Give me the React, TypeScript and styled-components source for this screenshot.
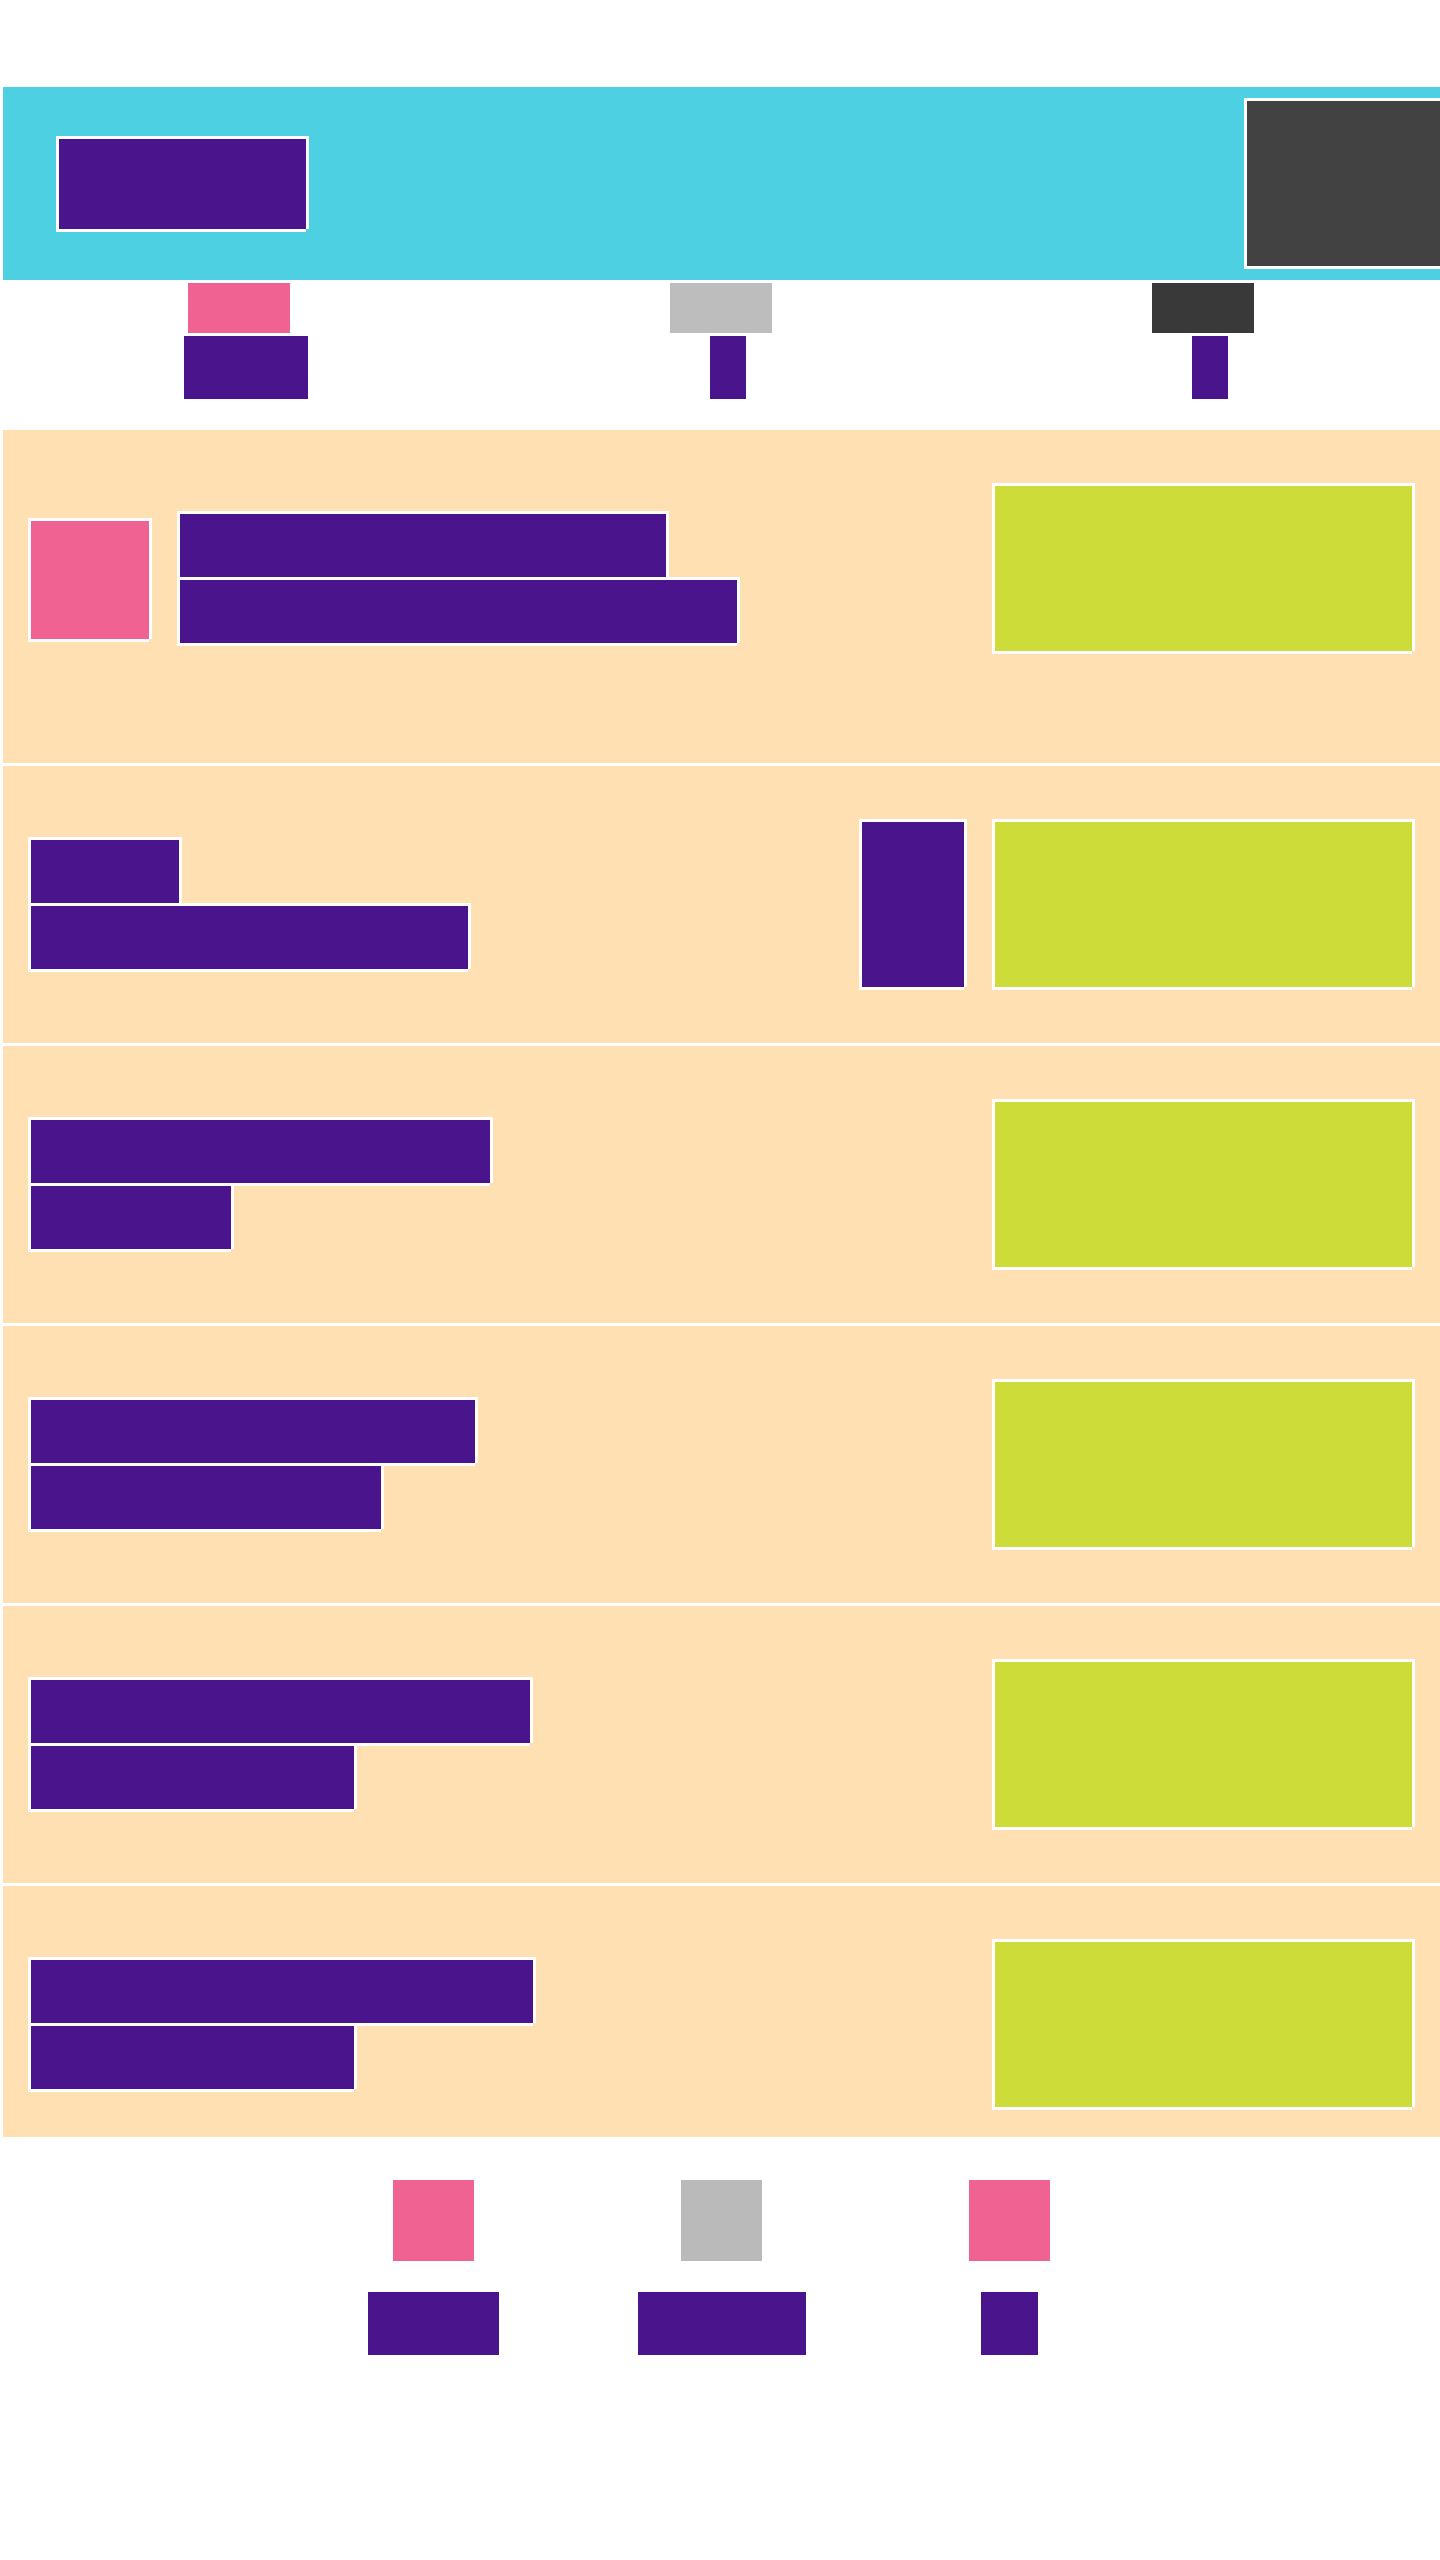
import React from "react";
import styled, { createGlobalStyle, css } from "styled-components";

const GlobalStyle = createGlobalStyle`
  html, body {
    margin: 0;
    padding: 0;
    background: #ffffff;
    font-family: "Liberation Sans", Arial, sans-serif;
    overflow-x: hidden;
  }
  * { box-sizing: border-box; }
`;

const C = {
  cyan: "#4dd0e1",
  purple: "#4a148c",
  pink: "#f06292",
  lime: "#cddc39",
  beige: "#ffe0b2",
  dark: "#424242",
  darker: "#393939",
  grey: "#bdbdbd",
  greyFooter: "#bababa",
};

const outlined = css`
  box-shadow: -3px -3px 0 #fff, 3px -3px 0 #fff, -3px 3px 0 #fff,
    3px 0 0 #fff, 0 3px 0 #fff;
`;

const Page = styled.div`
  width: 1440px;
  padding: 87px 0 0 3px;
  min-height: 2560px;
  overflow: hidden;
`;

/* ---------- Header ---------- */
const Header = styled.header`
  width: 1437px;
  height: 193px;
  background: ${C.cyan};
  display: flex;
  align-items: center;
  justify-content: space-between;
  padding-left: 56px;
`;

const Logo = styled.div`
  width: 247px;
  height: 90px;
  background: ${C.purple};
  ${outlined}
`;

const Account = styled.div`
  width: 193px;
  height: 165px;
  background: ${C.dark};
  box-shadow: -3px -3px 0 #fff, -3px 3px 0 #fff, 0 -3px 0 #fff, 0 3px 0 #fff;
`;

/* ---------- Nav ---------- */
const Nav = styled.nav`
  display: grid;
  grid-template-columns: repeat(3, 482px);
  padding: 3px 0 31px 2px;
`;

const NavItem = styled.div`
  display: flex;
  flex-direction: column;
  align-items: center;
  gap: 3px;
`;

const NavIcon = styled.div<{ $color: string }>`
  width: 102px;
  height: 50px;
  margin-right: 14px;
  background: ${(p) => p.$color};
`;

const NavLabel = styled.div<{ $w: number }>`
  width: ${(p) => p.$w}px;
  height: 63px;
  background: ${C.purple};
`;

/* ---------- Rows ---------- */
const Rows = styled.section`
  width: 1437px;
  height: 1707px;
  overflow: hidden;
  display: flex;
  flex-direction: column;
  gap: 3px;
`;

const Row = styled.article<{ $first?: boolean }>`
  flex: none;
  background: ${C.beige};
  display: flex;
  align-items: center;
  padding: 56px 28px ${(p) => (p.$first ? 112 : 56)}px 28px;
`;

const Lead = styled.div<{ $top?: boolean }>`
  flex: 1;
  display: flex;
  gap: 31px;
  align-items: flex-start;
  align-self: ${(p) => (p.$top ? "flex-start" : "center")};
  margin-top: ${(p) => (p.$top ? 28 : 0)}px;
`;

const Thumb = styled.div`
  width: 118px;
  height: 118px;
  margin-top: 7px;
  background: ${C.pink};
  ${outlined}
`;

const Lines = styled.div`
  display: flex;
  flex-direction: column;
  gap: 3px;
`;

const Line = styled.div<{ $w: number }>`
  width: ${(p) => p.$w}px;
  height: 63px;
  background: ${C.purple};
  ${outlined}
`;

const Tag = styled.div`
  width: 102px;
  height: 165px;
  margin-right: 31px;
  background: ${C.purple};
  ${outlined}
`;

const Media = styled.div`
  width: 417px;
  height: 165px;
  background: ${C.lime};
  ${outlined}
`;

/* ---------- Footer ---------- */
const Footer = styled.footer`
  width: 1437px;
  display: grid;
  grid-template-columns: repeat(3, 288px);
  justify-content: center;
  padding-top: 43px;
`;

const FooterItem = styled.div`
  display: flex;
  flex-direction: column;
  align-items: center;
  gap: 31px;
`;

const FooterIcon = styled.div<{ $color: string }>`
  width: 81px;
  height: 81px;
  background: ${(p) => p.$color};
`;

const FooterLabel = styled.div<{ $w: number }>`
  width: ${(p) => p.$w}px;
  height: 63px;
  background: ${C.purple};
`;

const navItems = [
  { color: C.pink, w: 124 },
  { color: C.grey, w: 36 },
  { color: C.darker, w: 36 },
];

const rows: { lines: number[]; tag?: boolean }[] = [
  { lines: [148, 437], tag: true },
  { lines: [459, 200] },
  { lines: [444, 350] },
  { lines: [499, 323] },
  { lines: [502, 323] },
];

const footerItems = [
  { color: C.pink, w: 131 },
  { color: C.greyFooter, w: 168 },
  { color: C.pink, w: 57 },
];

export default function App() {
  return (
    <>
      <GlobalStyle />
      <Page>
        <Header>
          <Logo />
          <Account />
        </Header>
        <Nav>
          {navItems.map((n, i) => (
            <NavItem key={i}>
              <NavIcon $color={n.color} />
              <NavLabel $w={n.w} />
            </NavItem>
          ))}
        </Nav>
        <Rows>
          <Row $first>
            <Lead $top>
              <Thumb />
              <Lines>
                <Line $w={486} />
                <Line $w={557} />
              </Lines>
            </Lead>
            <Media />
          </Row>
          {rows.map((r, i) => (
            <Row key={i}>
              <Lead>
                <Lines>
                  {r.lines.map((w, j) => (
                    <Line key={j} $w={w} />
                  ))}
                </Lines>
              </Lead>
              {r.tag && <Tag />}
              <Media />
            </Row>
          ))}
        </Rows>
        <Footer>
          {footerItems.map((f, i) => (
            <FooterItem key={i}>
              <FooterIcon $color={f.color} />
              <FooterLabel $w={f.w} />
            </FooterItem>
          ))}
        </Footer>
      </Page>
    </>
  );
}
